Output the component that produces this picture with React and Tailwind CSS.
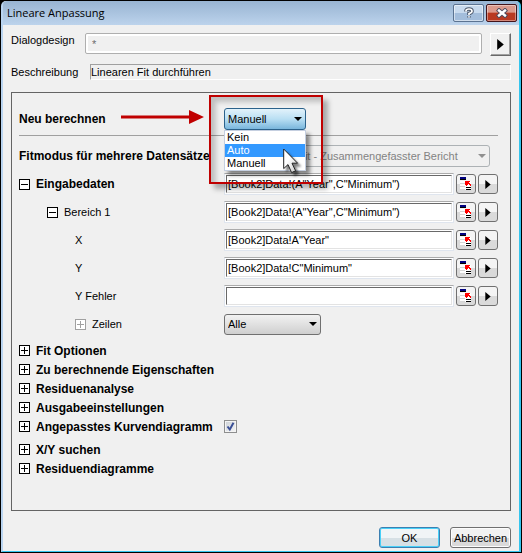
import React, { useState } from 'react';

const DownArrow = ({ className }) => (
  <svg viewBox="0 0 8 4" className={`pointer-events-none col-start-1 row-start-1 h-1 w-2 justify-self-end ${className}`}>
    <path d="M0 0h8L4 4z" fill="currentColor" />
  </svg>
);

const PlayIcon = ({ className }) => (
  <svg viewBox="0 0 6 10" className={className}>
    <path d="M0 0v10l6-5z" fill="#000" />
  </svg>
);

const SelectRangeIcon = () => (
  <svg viewBox="0 0 12 14" className="h-3.5 w-3 shrink-0" shapeRendering="crispEdges">
    <path d="M0 4h11v9H0z" fill="#fff" />
    <path d="M0 0h6v2H0z" fill="#000080" />
    <path d="M0 2h6v1H0z" fill="#000" />
    <path d="M0 6h5v1H0zM0 9h5v1H0zM0 12h5v1H0z" fill="#d5d5d5" />
    <path d="M5 4h5v1H9v1h1v1h1v2h-1V8H9V7H8v1H7v1H6V8H5z" fill="#f00" />
    <path d="M6 10h5v1H6zM6 12h5v1H6z" fill="#000" />
  </svg>
);

const ExpandBox = ({ open, muted }) => (
  <svg
    viewBox="0 0 11 11"
    className={`h-[11px] w-[11px] shrink-0 ${muted ? 'text-[#a0a0a0]' : 'text-black'}`}
    shapeRendering="crispEdges"
  >
    <path d="M0 0h11v11H0z" fill="currentColor" />
    <path d="M1 1h9v9H1z" fill="#fff" />
    <path d="M2 5h7v1H2z" fill="currentColor" />
    {!open && <path d="M5 2h1v7H5z" fill="currentColor" />}
  </svg>
);

const TreeButton = ({ open, muted, bold, children }) => (
  <button type="button" aria-expanded={!!open} className={`flex items-center gap-1.5 text-left ${bold ? 'text-[12px] font-bold' : ''}`}>
    <ExpandBox open={open} muted={muted} />
    {children}
  </button>
);

const Row = ({ label, indent = '', children }) => (
  <div className="grid h-7 grid-cols-[205px_1fr] items-center">
    <div className={`flex items-center whitespace-nowrap ${indent}`}>{label}</div>
    {children}
  </div>
);

const smallButton =
  'flex h-5 w-5 shrink-0 items-center justify-center rounded-[3px] border border-[#707070] bg-linear-to-b from-[#f4f4f4] from-50% to-[#dadada] to-50%';

const RangeInput = ({ id, name, value }) => {
  const [text, setText] = useState(value);

  return (
    <div className="flex items-center gap-0.5">
      <div className="flex h-[22px] min-w-0 flex-1 border border-[#dfe5ee] border-t-[#ababab] bg-white p-px">
        <input
          id={id}
          type="text"
          aria-label={name}
          value={text}
          onChange={(e) => setText(e.target.value)}
          className="w-full min-w-0 border border-[#e3e3e3] border-t-[#696969] border-l-[#696969] bg-white px-px outline-none"
        />
      </div>
      <button type="button" aria-label="Bereich wählen" className={smallButton}>
        <SelectRangeIcon />
      </button>
      <button type="button" aria-label="Menü" className={smallButton}>
        <PlayIcon className="h-[9px] w-[6px]" />
      </button>
    </div>
  );
};

const options = ['Kein', 'Auto', 'Manuell'];

const RecalculateSelect = () => {
  const [value, setValue] = useState('Manuell');

  return (
    <div className="relative z-10 grid w-[82px] items-center">
      <select
        id="recalc"
        value={value}
        onChange={(e) => setValue(e.target.value)}
        className="col-start-1 row-start-1 h-[22px] w-full appearance-none rounded-[3px] border border-[#2c628b] bg-linear-to-b from-[#e2f2fb] via-[#b9dff3] to-[#79b6dc] px-[3px] outline-none"
      >
        {options.map((o) => (
          <option key={o}>{o}</option>
        ))}
      </select>
      <DownArrow className="mr-1" />

      <ul
        role="listbox"
        aria-label="Neu berechnen"
        className="absolute top-full left-0 w-full border border-[#c5cfe0] bg-white shadow-[4px_4px_4px_rgba(0,0,0,0.45)]"
      >
        {options.map((o) => (
          <li
            key={o}
            role="option"
            aria-selected={o === 'Auto'}
            onClick={() => setValue(o)}
            className={`h-[13px] px-0.5 leading-[13px] ${o === 'Auto' ? 'bg-[#3399ff] text-white' : ''}`}
          >
            {o}
          </li>
        ))}
      </ul>

      <div className="pointer-events-none absolute -top-[13px] -left-[15px] h-[89px] w-[114px] border-2 border-[#c00000] shadow-[5px_5px_5px_rgba(0,0,0,0.3),inset_5px_5px_5px_rgba(0,0,0,0.2)]" />

      <svg viewBox="0 0 18 27" className="pointer-events-none absolute top-10 left-[59px] h-[27px] w-[18px] drop-shadow-[3px_3px_1px_rgba(0,0,0,0.5)]">
        <defs>
          <linearGradient id="cursorFill" x1="0" y1="0" x2="1" y2="1">
            <stop offset="0.4" stopColor="#fff" />
            <stop offset="1" stopColor="#c4c4c4" />
          </linearGradient>
        </defs>
        <path d="M.7 1v19.600l4.300-4 3.600 8 4-1.800-3.600-7.600h5.600z" fill="url(#cursorFill)" stroke="#222" strokeWidth="1" />
      </svg>
    </div>
  );
};

const sections = ['Fit Optionen', 'Zu berechnende Eigenschaften', 'Residuenanalyse', 'Ausgabeeinstellungen'];

const App = () => {
  const [design, setDesign] = useState('*');
  const [plot, setPlot] = useState(true);

  return (
    <div className="flex min-h-screen flex-col bg-black p-px font-['Liberation_Sans',Arial,sans-serif] text-[11px] leading-[14px] text-black">
      <div className="flex flex-1 flex-col rounded-t-[5px] border-x-2 border-b border-[#35c5ee] border-l-[#b9d4f0] bg-[#f0f0f0]">
        <header className="flex h-6 items-center rounded-t-[4px] bg-linear-to-b from-[#98b4d2] to-[#bcd3ec] pr-0.5 pl-1">
          <h1 className="flex-1 font-['Open_Sans','Noto_Sans',sans-serif] text-[11px] leading-4">Lineare Anpassung</h1>
          <div className="flex gap-0.5">
            <button
              type="button"
              aria-label="Hilfe"
              className="flex h-[18px] w-[31px] items-center justify-center rounded-[2px] border border-[#5b7391] bg-linear-to-b from-[#c8daee] from-50% to-[#a3bddb] to-50% shadow-[inset_0_0_0_1px_rgba(255,255,255,0.5)]"
            >
              <svg viewBox="0 0 10 12" className="h-3 w-2.5">
                <path d="M2 4.500V4Q2 2 5 2t3 2.200Q8 5.500 5 6.500V8M5 9.200v1.300" fill="none" stroke="#4a5568" strokeWidth="3.600" />
                <path d="M2 4.500V4Q2 2 5 2t3 2.200Q8 5.500 5 6.500V8M5 9.200v1.300" fill="none" stroke="#fff" strokeWidth="1.700" />
              </svg>
            </button>
            <button
              type="button"
              aria-label="Schließen"
              className="flex h-[18px] w-[31px] items-center justify-center rounded-[2px] border border-[#43141a] bg-linear-to-b from-[#dc9a8d] from-45% to-[#b93a22] to-50% shadow-[inset_0_0_0_1px_rgba(255,255,255,0.4)]"
            >
              <svg viewBox="0 0 12 10" className="h-2.5 w-3">
                <path d="M3 2.500l6 5M9 2.500l-6 5" stroke="#4f4a5c" strokeWidth="4.400" strokeLinecap="square" />
                <path d="M3 2.500l6 5M9 2.500l-6 5" stroke="#fff" strokeWidth="2.400" strokeLinecap="square" />
              </svg>
            </button>
          </div>
        </header>

        <main className="flex flex-1 flex-col px-2 pt-2 pb-[3px]">
          <div className="flex h-[22px] items-start">
            <label htmlFor="design" className="w-[74px]">Dialogdesign</label>
            <div className="mr-2 flex h-[21px] flex-1 rounded-[2px] border border-[#afafaf] bg-white p-0.5">
              <input
                id="design"
                type="text"
                value={design}
                onChange={(e) => setDesign(e.target.value)}
                className="w-full bg-[#f0f0f0] px-1 text-[#6d6d6d] outline-none"
              />
            </div>
            <button
              type="button"
              aria-label="Designmenü"
              className="flex h-[23px] w-[21px] items-center justify-center border border-white border-r-[#696969] border-b-[#696969] bg-[#f0f0f0] shadow-[inset_-1px_-1px_0_#a0a0a0]"
            >
              <PlayIcon className="h-[11px] w-[7px]" />
            </button>
          </div>

          <div className="mt-[9px] flex h-4 items-center">
            <label htmlFor="description" className="w-[79px]">Beschreibung</label>
            <input
              id="description"
              type="text"
              readOnly
              value="Linearen Fit durchführen"
              className="h-4 min-w-0 flex-1 border border-white border-t-[#a0a0a0] border-l-[#a0a0a0] bg-[#f0f0f0] outline-none"
            />
          </div>

          <section className="mt-3 flex-1 border border-[#646464] pt-3 pr-3 pl-[7px]">
            <Row
              label={
                <>
                  <label htmlFor="recalc" className="text-[12px] font-bold">Neu berechnen</label>
                  <svg viewBox="0 0 83 16" className="mr-5 mb-1 ml-auto h-4 w-[83px]">
                    <path d="M0 6.500h68V1l15 7-15 7V9.500H0z" fill="#c00000" />
                  </svg>
                </>
              }
            >
              <RecalculateSelect />
            </Row>
            <hr className="mt-0.5 mb-1.5 border-[#a0a0a0]" />
            <Row label={<label htmlFor="fitmode" className="text-[12px] font-bold">Fitmodus für mehrere Datensätze</label>}>
              <div className="mr-2 grid items-center text-[#838383]">
                <select
                  id="fitmode"
                  disabled
                  className="col-start-1 row-start-1 h-[22px] w-full appearance-none rounded-[3px] border border-[#adb2b5] bg-[#f0f0f0] px-px opacity-100"
                >
                  <option>Unabhängiger Fit - Zusammengefasster Bericht</option>
                </select>
                <DownArrow className="mr-1 text-[#909090]" />
              </div>
            </Row>

            <Row label={<TreeButton open bold>Eingabedaten</TreeButton>}>
              <RangeInput name="Eingabedaten" value={'[Book2]Data!(A"Year",C"Minimum")'} />
            </Row>
            <Row indent="pl-7" label={<TreeButton open>Bereich 1</TreeButton>}>
              <RangeInput name="Bereich 1" value={'[Book2]Data!(A"Year",C"Minimum")'} />
            </Row>
            <Row indent="pl-14" label={<label htmlFor="x">X</label>}>
              <RangeInput id="x" value={'[Book2]Data!A"Year"'} />
            </Row>
            <Row indent="pl-14" label={<label htmlFor="y">Y</label>}>
              <RangeInput id="y" value={'[Book2]Data!C"Minimum"'} />
            </Row>
            <Row indent="pl-14" label={<label htmlFor="y-error">Y Fehler</label>}>
              <RangeInput id="y-error" value="" />
            </Row>
            <Row indent="pl-14" label={<TreeButton muted>Zeilen</TreeButton>}>
              <div className="grid w-[97px] items-center">
                <select
                  aria-label="Zeilen"
                  className="col-start-1 row-start-1 h-[21px] w-full appearance-none rounded-[3px] border border-[#707070] bg-linear-to-b from-[#f2f2f2] to-[#cfcfcf] px-[3px] outline-none"
                >
                  <option>Alle</option>
                </select>
                <DownArrow className="mr-1" />
              </div>
            </Row>

            <div className="mt-[3px]">
              {sections.map((title) => (
                <div key={title} className="flex h-[19px] items-center">
                  <TreeButton bold>{title}</TreeButton>
                </div>
              ))}
              <div className="grid h-[19px] grid-cols-[205px_1fr] items-center">
                <TreeButton bold>Angepasstes Kurvendiagramm</TreeButton>
                <div className="grid w-[13px]">
                  <input
                    type="checkbox"
                    aria-label="Angepasstes Kurvendiagramm"
                    checked={plot}
                    onChange={(e) => setPlot(e.target.checked)}
                    className="col-start-1 row-start-1 h-[13px] w-[13px] appearance-none border border-[#8e8f8f] bg-linear-to-br from-[#cbd0d6] to-[#f6f6f6] shadow-[inset_0_0_0_1px_#f4f4f4]"
                  />
                  {plot && (
                    <svg viewBox="0 0 13 13" className="pointer-events-none col-start-1 row-start-1 h-[13px] w-[13px]">
                      <path d="M3.500 6.500l2.300 3L9.500 2.800" fill="none" stroke="#3a4f96" strokeWidth="2" />
                    </svg>
                  )}
                </div>
              </div>
            </div>
            <div className="mt-1">
              {['X/Y suchen', 'Residuendiagramme'].map((title) => (
                <div key={title} className="flex h-[19px] items-center">
                  <TreeButton bold>{title}</TreeButton>
                </div>
              ))}
            </div>
          </section>

          <footer className="flex justify-end gap-2.5 pt-4">
            <button
              type="button"
              className="h-[21px] w-[61px] rounded-[3px] border border-[#3c7fb1] bg-linear-to-b from-[#f0f4f6] from-50% to-[#d6e0e5] to-50% shadow-[inset_0_0_0_1px_#48d0f8]"
            >
              OK
            </button>
            <button
              type="button"
              className="h-[21px] w-[61px] rounded-[3px] border border-[#707070] bg-linear-to-b from-[#f2f2f2] from-50% to-[#dadada] to-50% whitespace-nowrap shadow-[inset_0_0_0_1px_#fcfcfc]"
            >
              Abbrechen
            </button>
          </footer>
        </main>
      </div>
    </div>
  );
};

export default App;
